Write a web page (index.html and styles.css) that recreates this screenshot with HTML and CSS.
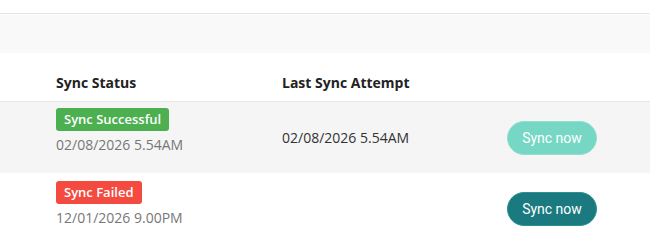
FILE: index.html
```html
<!DOCTYPE html>
<html>
<head>
<meta charset="utf-8">
<link rel="stylesheet" href="styles.css">
</head>
<body>
<div class="panel">
  <div class="topline"></div>
  <div class="toolbar"></div>
  <div class="row head">
    <div class="cell"></div>
    <div class="cell">Sync Status</div>
    <div class="cell">Last Sync Attempt</div>
    <div class="cell"></div>
  </div>
  <div class="row body alt">
    <div class="cell"></div>
    <div class="cell status">
      <span class="badge ok">Sync Successful</span>
      <span class="when">02/08/2026 5.54AM</span>
    </div>
    <div class="cell last">02/08/2026 5.54AM</div>
    <div class="cell act"><button class="btn disabled">Sync now</button></div>
  </div>
  <div class="row body">
    <div class="cell"></div>
    <div class="cell status">
      <span class="badge fail">Sync Failed</span>
      <span class="when">12/01/2026 9.00PM</span>
    </div>
    <div class="cell last"></div>
    <div class="cell act"><button class="btn">Sync now</button></div>
  </div>
</div>
</body>
</html>
```
FILE: styles.css
```css
html, body { margin: 0; padding: 0; background: #fff; }
body { font-family: "Open Sans", "Liberation Sans", sans-serif; color: #333; }
.panel { width: 650px; padding-top: 13px; }
.topline { height: 1px; background: #e4e4e4; border-bottom: 1px solid #fff; }
.toolbar { height: 38px; background: #f9f9f9; }
.row { display: grid; grid-template-columns: 56px 226px 225px 143px; align-items: center; }
.head { height: 48px; border-bottom: 1px solid #e6e6e6; font-size: 14px; font-weight: 700; color: #222; }
.head .cell { padding-top: 10px; }
.body { height: 71px; }
.alt { background: #f5f5f5; }
.status { align-self: start; display: flex; flex-direction: column; align-items: flex-start; gap: 4px; padding-top: 8px; }
.alt .status { padding-top: 6px; }
.badge { display: inline-block; color: #fff; font-size: 13px; font-weight: 600; line-height: 23px; height: 23px; padding: 0 8px; border-radius: 3px; }
.badge.ok { background: #4caf50; }
.badge.fail { background: #f44a3f; }
.when { font-size: 14px; color: #777; line-height: 20px; }
.last { font-size: 14px; color: #333; }
.act { display: flex; }
.btn { width: 90px; height: 34px; border-radius: 17px; border: 1px solid #2a9296; background: #1b7a80; color: #fff; font-family: Roboto, "Liberation Sans", sans-serif; font-size: 14px; padding: 0; }
.btn.disabled { background: #76d7c4; border-color: #8ee0cf; }
```
